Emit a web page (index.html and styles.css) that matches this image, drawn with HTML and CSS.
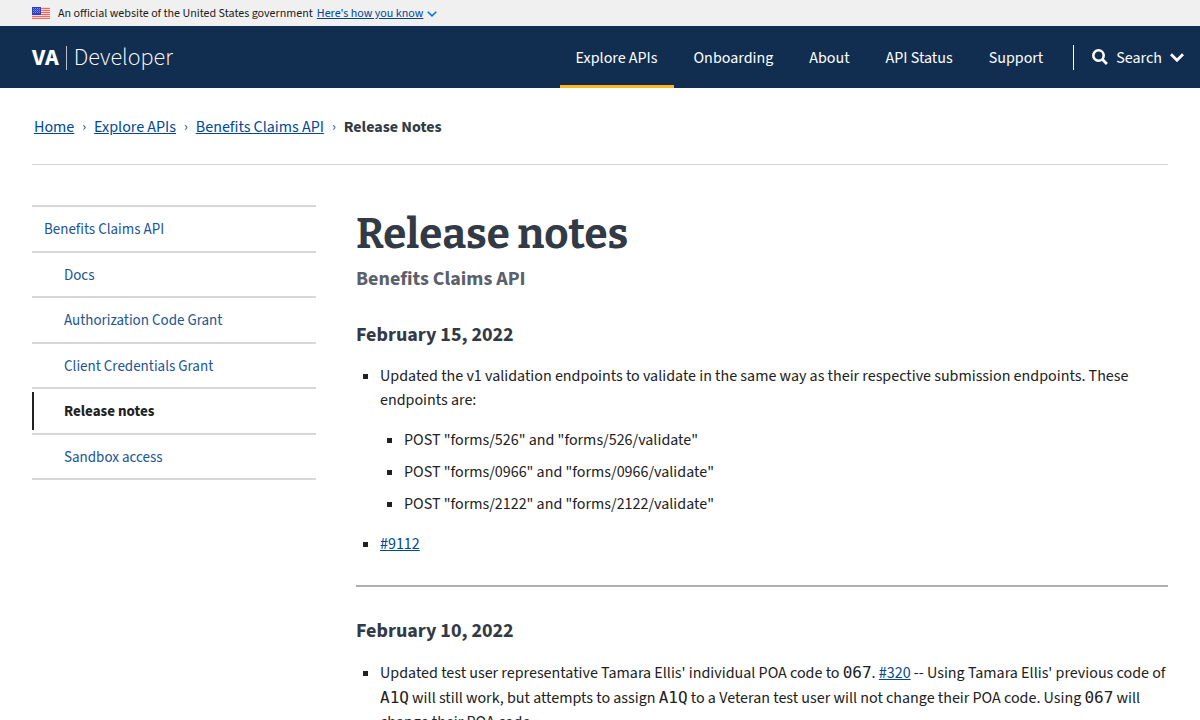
FILE: index.html
```html
<!DOCTYPE html>
<html lang="en">
<head>
<meta charset="utf-8">
<meta name="viewport" content="width=device-width, initial-scale=1">
<title>Release notes | VA Developer</title>
<link rel="stylesheet" href="styles.css">
</head>
<body>
<section class="banner" aria-label="Official government website">
  <svg class="flag" viewBox="0 0 18 12" aria-hidden="true">
    <rect width="18" height="12" fill="#fcd5d3"/>
    <path d="M0 1.5h18M0 3.5h18M0 5.5h18M0 7.5h18M0 9.5h18M0 11.5h18" stroke="#f4665f"/>
    <rect width="9" height="8" fill="#2b3fc0"/>
    <path d="M1 1.5h7M1 3.5h7M1 5.5h7" stroke="#8290de" stroke-dasharray="1 1"/>
    <path d="M2 2.5h6M2 4.5h6" stroke="#6374d3" stroke-dasharray="1 1"/>
  </svg>
  <span class="banner-text">An official website of the United States government</span>
  <button class="banner-toggle" type="button"><span class="banner-text">Here's how you know</span>
    <svg class="banner-chevron" viewBox="0 0 10 6" aria-hidden="true"><path d="M.7.7 5 4.9 9.3.7" fill="none" stroke="#0076d6" stroke-width="1.5"/></svg>
  </button>
</section>
<header class="header">
  <a class="logo" href="#"><b>VA</b><span class="logo-bar"></span><span class="logo-name">Developer</span></a>
  <nav class="nav" aria-label="Primary">
    <a class="nav-link nav-current" href="#">Explore APIs</a>
    <a class="nav-link" href="#">Onboarding</a>
    <a class="nav-link" href="#">About</a>
    <a class="nav-link" href="#">API Status</a>
    <a class="nav-link" href="#">Support</a>
  </nav>
  <button class="search" type="button">
    <svg class="search-icon" viewBox="0 0 16 16" aria-hidden="true"><circle cx="6.5" cy="6.5" r="5.2" fill="none" stroke="#fff" stroke-width="2.6"/><path d="m10.5 10.5 4.4 4.4" stroke="#fff" stroke-width="2.8"/></svg>
    <span class="search-text">Search</span>
    <svg class="search-chevron" viewBox="0 0 14 9" aria-hidden="true"><path d="M1 1.2 7 7.2 13 1.2" fill="none" stroke="#fff" stroke-width="2.8"/></svg>
  </button>
</header>
<div class="page">
  <nav class="crumbs" aria-label="Breadcrumb">
    <a class="link" href="#">Home</a><span class="crumb-sep">›</span>
    <a class="link" href="#">Explore APIs</a><span class="crumb-sep">›</span>
    <a class="link" href="#">Benefits Claims API</a><span class="crumb-sep">›</span>
    <b class="crumb-current">Release Notes</b>
  </nav>
  <div class="columns">
    <nav class="sidebar" aria-label="Benefits Claims API">
      <a class="side-link side-top" href="#">Benefits Claims API</a>
      <a class="side-link" href="#">Docs</a>
      <a class="side-link" href="#">Authorization Code Grant</a>
      <a class="side-link" href="#">Client Credentials Grant</a>
      <a class="side-link side-current" href="#" aria-current="page">Release notes</a>
      <a class="side-link" href="#">Sandbox access</a>
    </nav>
    <main class="content">
      <h1 class="title">Release notes</h1>
      <p class="subtitle">Benefits Claims API</p>
      <h2 class="date">February 15, 2022</h2>
      <ul class="notes">
        <li>Updated the v1 validation endpoints to validate in the same way as their respective submission endpoints. These endpoints are:
          <ul class="endpoints">
            <li>POST "forms/526" and "forms/526/validate"</li>
            <li>POST "forms/0966" and "forms/0966/validate"</li>
            <li>POST "forms/2122" and "forms/2122/validate"</li>
          </ul>
        </li>
        <li><a class="link" href="#">#9112</a></li>
      </ul>
      <hr class="rule">
      <h2 class="date">February 10, 2022</h2>
      <ul class="notes">
        <li>Updated test user representative Tamara Ellis' individual POA code to <code>067</code>. <a class="link" href="#">#320</a> -- Using Tamara Ellis' previous code of <code>A1Q</code> will still work, but attempts to assign <code>A1Q</code> to a Veteran test user will not change their POA code. Using <code>067</code> will change their POA code.</li>
      </ul>
    </main>
  </div>
</div>
</body>
</html>
```
FILE: styles.css
```css
* { box-sizing: border-box; }
body {
  margin: 0;
  height: 100vh;
  overflow: hidden;
  background: #fff;
  color: #212121;
  font: 16px/24px "Source Sans 3", "Source Sans Pro", "Noto Sans CJK JP", sans-serif;
}
button { font: inherit; border: 0; padding: 0; background: none; cursor: pointer; }
a { text-decoration: none; }
svg { display: block; flex: none; }

.banner { display: flex; align-items: center; height: 26px; padding: 0 32px; background: #f0f0f0; font-size: 12px; color: #1b1b1b; }
.banner-text { padding-top: 2px; }
.flag { width: 18px; height: 12px; margin-right: 8px; }
.banner-toggle { display: flex; align-items: center; gap: 4px; margin-left: 4px; color: #004795; }
.banner-toggle .banner-text { text-decoration: underline; }
.banner-chevron { width: 10px; height: 6px; margin-top: 2px; }

.header { display: flex; align-items: stretch; height: 62px; padding: 0 16px 0 32px; background: #112e51; color: #fff; }
.logo { display: flex; align-items: center; margin-right: auto; padding-top: 2px; color: #fff; font-size: 24px; }
.logo-bar { width: 1px; height: 24px; margin: 0 7px; background: #b8c0cb; }
.logo-name { font-weight: 300; }
.nav { display: flex; gap: 4px; margin-right: 14px; }
.nav-link { display: flex; align-items: center; padding: 5px 16px 0; border-bottom: 3px solid transparent; color: #fff; }
.nav-current { border-bottom-color: #fdb81e; }
.search { display: flex; align-items: center; align-self: center; gap: 8px; height: 25px; padding-left: 18px; border-left: 1px solid #fff; color: #fff; }
.search-text { padding-top: 2px; }
.search-icon { width: 16px; height: 16px; }
.search-chevron { width: 14px; height: 9px; }

.page { padding: 0 32px; }
.crumbs { display: flex; height: 77px; align-items: center; padding: 2px 0 0 2px; border-bottom: 1px solid #d6d7d9; }
.link { color: #004795; text-decoration: underline; }
.crumb-sep { margin: 0 8px; color: #004795; font-size: 14px; }
.crumb-current { color: #323a45; }

.columns { display: grid; grid-template-columns: minmax(0, 284fr) minmax(0, 812fr); gap: 40px; padding-top: 40px; }
.sidebar { align-self: start; border-bottom: 2px solid #d6d7d9; }
.side-link { position: relative; display: block; padding: 13px 12px 11px 32px; border-top: 2px solid #d6d7d9; font-size: 15px; line-height: 1.3; color: #205493; }
.side-top { padding-left: 12px; }
.side-current { color: #212121; font-weight: 700; }
.side-current::before { content: ""; position: absolute; left: 0; top: 3px; bottom: 3px; width: 2px; background: #212121; }

.title { margin: 0; font: 700 42px/58px Bitter, "DejaVu Serif", serif; color: #323a45; }
.subtitle { margin: 2px 0 0; font-size: 20px; line-height: 28px; font-weight: 700; color: #5b616b; }
.date { margin: 28px 0 15px; font-size: 20px; line-height: 28px; color: #323a45; }
.notes, .endpoints { margin: 0; padding-left: 24px; list-style: square; }
.notes > li + li { margin-top: 16px; }
.endpoints { margin-top: 16px; }
.endpoints li + li { margin-top: 8px; }
.rule { margin: 29px 0 30px; border: 0; border-top: 2px solid #aeb0b5; }
code { font: 16px/25px "DejaVu Sans Mono", monospace; }
```
